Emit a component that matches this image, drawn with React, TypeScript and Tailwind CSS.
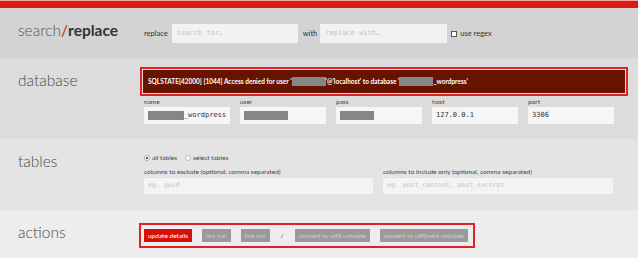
import React from 'react';

const Redact = ({ className }: { className: string }) => (
  <span className={`inline-block h-[9px] bg-[#868686] ${className}`} />
);

const Field = ({ label, children }: { label: string; children?: React.ReactNode }) => (
  <div className="flex w-[86px] flex-col">
    <span className="h-[8px] text-[6.5px] leading-[8px] text-[#444]">{label}</span>
    <div className="mt-[1px] flex h-[17px] items-center bg-[#f6f6f6] px-[4px] font-['DejaVu_Sans_Mono',monospace] text-[7px] text-[#333]">
      {children}
    </div>
  </div>
);

const Heading = ({ children }: { children: React.ReactNode }) => (
  <div className="w-[144px] shrink-0 pl-[18px] pt-[12px]">
    <h2 className="text-[15.5px] font-light leading-[20px] text-[#4a4a4a]">{children}</h2>
  </div>
);

export default function App() {
  return (
    <div className="w-[638px] bg-white font-['Lato',sans-serif]">
      {/* top bar */}
      <div className="h-[8px] border-t border-[#f0a9a5] bg-[#dc1a12]" />

      {/* search / replace */}
      <section className="flex h-[50px] bg-[#d3d3d3]">
        <Heading>
          <span className="text-[#555]">search</span>
          <span className="font-normal text-[#d4150e]">/</span>
          <span className="font-bold text-[#333]">replace</span>
        </Heading>
        <div className="flex items-center gap-[3px] pt-[16px] self-start text-[7.5px] text-[#333]">
          <span className="mr-[1px]">replace</span>
          <div className="flex h-[19px] w-[126px] items-center bg-[#f2f2f2] px-[5px] font-['DejaVu_Sans_Mono',monospace] text-[7px] text-[#c4c4c4]">
            search for…
          </div>
          <span className="ml-[2px]">with</span>
          <div className="flex h-[19px] w-[127px] items-center bg-[#f2f2f2] px-[5px] font-['DejaVu_Sans_Mono',monospace] text-[7px] text-[#c4c4c4]">
            replace with…
          </div>
          <span className="ml-[1px] inline-block h-[6px] w-[6px] border border-[#555] bg-white" />
          <span>use regex</span>
        </div>
      </section>

      {/* database */}
      <section className="flex h-[81px] bg-[#dcdcdc]">
        <Heading>database</Heading>
        <div className="flex flex-col pt-[9px]">
          <div className="-ml-[4px] w-[488px] border-2 border-[#e01f27] bg-[#f0dada] p-[1px]">
            <div className="flex h-[23px] items-center bg-[#661300] pl-[5px] text-[6.5px] font-bold text-white">
              <span>SQLSTATE[42000] [1044] Access denied for user '</span>
              <Redact className="w-[34px]" />
              <span>'@'localhost' to database '</span>
              <Redact className="w-[34px]" />
              <span>_wordpress'</span>
            </div>
          </div>
          <div className="mt-[2px] flex gap-[10px]">
            <Field label="name">
              <Redact className="w-[39px]" />
              <span>_wordpress</span>
            </Field>
            <Field label="user">
              <Redact className="w-[44px]" />
            </Field>
            <Field label="pass">
              <Redact className="w-[34px]" />
            </Field>
            <Field label="host">127.0.0.1</Field>
            <Field label="port">3306</Field>
          </div>
        </div>
      </section>

      {/* tables */}
      <section className="flex h-[71px] bg-[#e4e4e4]">
        <Heading>tables</Heading>
        <div className="flex flex-col pt-[14px] text-[6.5px] text-[#444]">
          <div className="flex h-[10px] items-center">
            <span className="flex h-[6px] w-[6px] items-center justify-center rounded-full border border-[#aaa] bg-white">
              <span className="h-[2px] w-[2px] rounded-full bg-[#333]" />
            </span>
            <span className="ml-[2px]">all tables</span>
            <span className="ml-[8px] h-[6px] w-[6px] rounded-full border border-[#bbb] bg-white" />
            <span className="ml-[2px]">select tables</span>
          </div>
          <div className="mt-[5px] flex gap-[10px]">
            <div className="flex w-[229px] flex-col">
              <span className="h-[8px] leading-[8px]">columns to exclude (optional, comma separated)</span>
              <div className="mt-[2px] flex h-[16px] items-center bg-[#f4f4f4] px-[4px] font-['DejaVu_Sans_Mono',monospace] text-[6.5px] text-[#c4c4c4]">
                eg. guid
              </div>
            </div>
            <div className="flex w-[230px] flex-col">
              <span className="h-[8px] leading-[8px]">columns to include only (optional, comma separated)</span>
              <div className="mt-[2px] flex h-[16px] items-center bg-[#f4f4f4] px-[4px] font-['DejaVu_Sans_Mono',monospace] text-[6.5px] text-[#c4c4c4]">
                eg. post_content, post_excerpt
              </div>
            </div>
          </div>
        </div>
      </section>

      {/* actions */}
      <section className="flex h-[48px] bg-[#ededed]">
        <Heading>actions</Heading>
        <div className="pt-[10px]">
          <div className="-ml-[5px] inline-flex h-[25px] items-center gap-[10px] border-2 border-[#e01f27] pl-[3px] pr-[5px] text-[6.5px]">
            <span className="flex h-[13px] items-center bg-[#d6110b] px-[4px] text-white">update details</span>
            <span className="flex h-[13px] items-center bg-[#9a9a9a] px-[4px] text-[#cfcfcf]">dry run</span>
            <span className="flex h-[13px] items-center bg-[#9a9a9a] px-[4px] text-[#cfcfcf]">live run</span>
            <span className="px-[1px] text-[#444]">/</span>
            <span className="flex h-[13px] items-center bg-[#9a9a9a] px-[4px] text-[#cfcfcf]">convert to utf8 unicode</span>
            <span className="flex h-[13px] items-center bg-[#9a9a9a] px-[4px] text-[#cfcfcf]">convert to utf8mb4 unicode</span>
          </div>
        </div>
      </section>
    </div>
  );
}
